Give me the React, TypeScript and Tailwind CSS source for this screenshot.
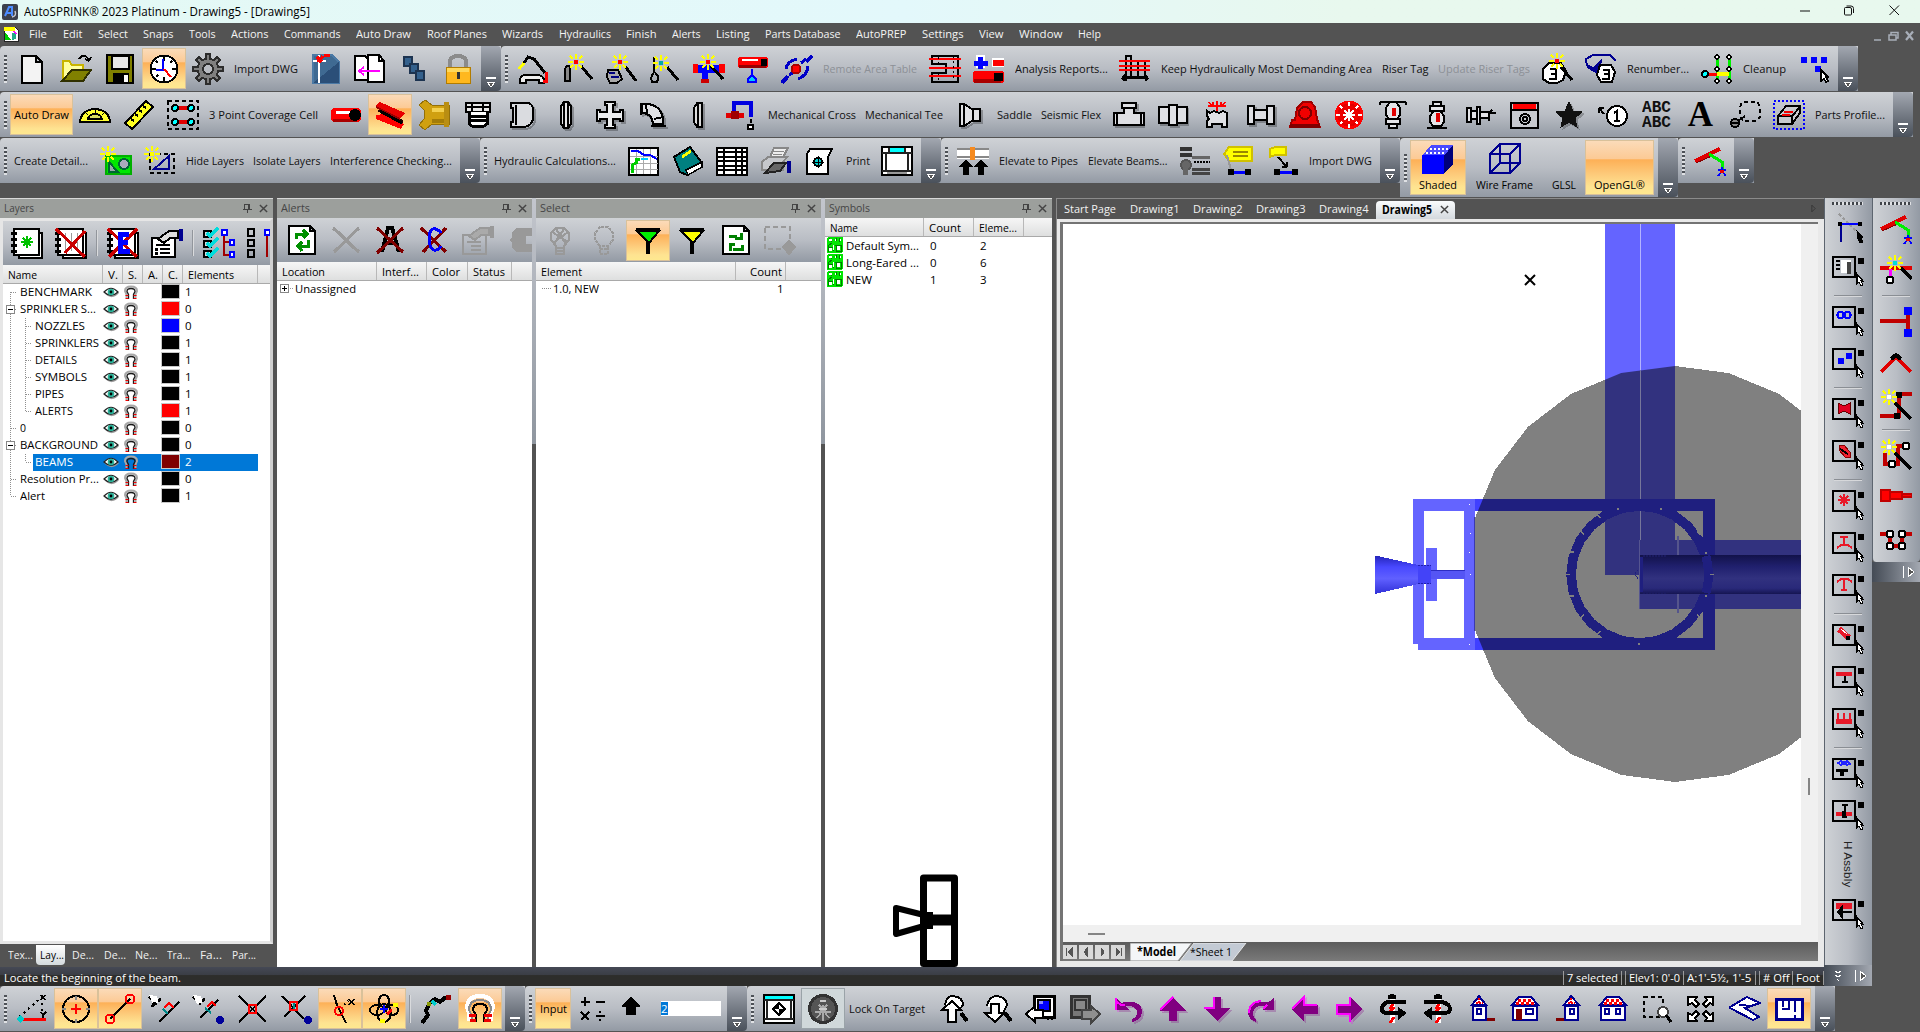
import React, { useLayoutEffect, useRef, useState } from "react";

type Kids = { children?: React.ReactNode };

/* Text condensed or widened to an exact width, as the narrow UI face needs. */
function Fit({ w, children, className = "" }: Kids & { w: number; className?: string }) {
  const ref = useRef<HTMLSpanElement>(null);
  const [k, setK] = useState(1);
  useLayoutEffect(() => {
    const el = ref.current;
    if (!el) return;
    el.style.transform = "none";
    const r = w / el.getBoundingClientRect().width;
    el.style.transform = `scaleX(${r})`;
    setK(r);
  }, [w]);
  return (
    <span className={`inline-block shrink-0 whitespace-nowrap ${className}`} style={{ width: w }}>
      <span ref={ref} className="inline-block origin-left" style={{ transform: `scaleX(${k})` }}>
        {children}
      </span>
    </span>
  );
}

const Svg = ({ children, vb = "0 0 32 32", c = "h-8 w-8" }: Kids & { vb?: string; c?: string }) => (
  <svg viewBox={vb} className={`shrink-0 ${c}`} shapeRendering="crispEdges" fill="none">
    {children}
  </svg>
);
const P = ({ d, s = "#000", w = 2, f = "none", dash }: { d: string; s?: string; w?: number; f?: string; dash?: string }) => (
  <path d={d} stroke={s} strokeWidth={w} fill={f} strokeDasharray={dash} />
);
const R = ({ x, y, w, h, f = "#000", s = "none", sw = 2 }: { x: number; y: number; w: number; h: number; f?: string; s?: string; sw?: number }) => (
  <rect x={x} y={y} width={w} height={h} fill={f} stroke={s} strokeWidth={sw} />
);
const C = ({ x, y, r, f = "none", s = "#000", w = 2 }: { x: number; y: number; r: number; f?: string; s?: string; w?: number }) => (
  <circle cx={x} cy={y} r={r} fill={f} stroke={s} strokeWidth={w} />
);
const Burst = ({ x, y, m = "#f00" }: { x: number; y: number; m?: string }) => (
  <g transform={`translate(${x} ${y})`}>
    <P d="M0 -8V-3M0 3V8M-8 0H-3M3 0H8M-6 -6L-3 -3M3 3L6 6M6 -6L3 -3M-3 3L-6 6" s="#ff0" />
    <R x={-2} y={-2} w={4} h={4} f={m} />
  </g>
);
const Shade = ({ children }: Kids) => (
  <>
    <g transform="translate(2 2)" opacity={0.25}>{children}</g>
    {children}
  </>
);

const ICON: Record<string, React.ReactNode> = {
  fresh: <P d="M6 3H20L26 9V30H6ZM20 3V9H26" f="#f3f3f3" />,
  open: (
    <>
      <P d="M3 28V8H9L12 12H23V17" f="#ffffa0" s="#c8b400" />
      <P d="M2 28L12 17H31L23 28Z" f="#808000" s="#303000" />
      <P d="M19 6C22 1 27 2 29 8M29 8L25 6M29 8L31 4" />
    </>
  ),
  save: (
    <>
      <R x={3} y={2} w={26} h={28} f="#808000" s="#000" />
      <R x={8} y={3} w={17} h={13} f="#e8e8e8" s="#000" />
      <R x={9} y={20} w={16} h={10} />
      <R x={20} y={22} w={4} h={7} f="#fff" />
    </>
  ),
  clock: (
    <>
      <C x={16} y={16} r={13.5} f="#fff" />
      <P d="M16 4V8M16 24V28M4 16H8M24 16H28M8 8L10 10M24 8L22 10M8 24L10 22" w={1.5} />
      <P d="M15 6V17H8" s="#00f" />
      <P d="M16 16L23 24" s="#f00" />
    </>
  ),
  gear: (
    <>
      <P d="M14 1H18V6L22 7L25 4L28 7L25 10L26 14H31V18H26L25 22L28 25L25 28L22 25L18 26V31H14V26L10 25L7 28L4 25L7 22L6 18H1V14H6L7 10L4 7L7 4L10 7L14 6Z" s="#2c2c2c" f="#808080" />
      <C x={16} y={16} r={5} s="#2c2c2c" f="#b9bcc2" />
    </>
  ),
  dwg: (
    <>
      <P d="M3 2H22L29 9V30H3Z" f="#3f6a92" s="#4b79a5" />
      <P d="M3 30L29 9V30Z" s="none" f="#2b4f78" />
      <P d="M9 2V30M3 8H16" s="#fff" />
      <P d="M7 4L12 9M13 3L8 9M14 2H20" s="#f00" w={3} />
    </>
  ),
  pages: (
    <>
      <P d="M1 3H11L14 6V27H1Z" f="#fff" />
      <P d="M14 2H25L30 8V29H14Z" f="#fff" />
      <P d="M25 2V8H30" />
      <P d="M26 18H5M10 14L5 18L10 22" s="#f0f" />
    </>
  ),
  cubes: (
    <>
      <R x={6} y={4} w={8} h={9} f="#33608c" s="#1c3350" />
      <R x={12} y={11} w={8} h={9} f="#33608c" s="#1c3350" />
      <R x={18} y={18} w={8} h={9} f="#33608c" s="#1c3350" />
    </>
  ),
  lock: (
    <>
      <P d="M8 15V8Q9 3 16 3Q23 3 24 8V15" s="#8b8b8b" w={4} />
      <R x={4} y={14} w={24} h={16} f="#ffb81e" s="#b27c00" sw={1} />
      <R x={5} y={15} w={22} h={4} f="#ffd85a" />
      <R x={15} y={19} w={3} h={7} f="#333" />
    </>
  ),
  helmet: (
    <>
      <P d="M7 10L11 4L17 6L28 20" w={3} />
      <P d="M2 16L7 10" s="#ff0" w={3} />
      <P d="M3 30V26Q4 21 12 22H20Q25 22 27 26V30H22V27H9V30Z" f="#eee" w={2} />
      <P d="M29 19V28H26" s="#f00" w={3} />
    </>
  ),
  wand1: (
    <>
      <P d="M5 14Q8 11 9 15V28H4V16Z" f="#888" w={2} />
      <P d="M20 13L31 26" w={3} />
      <Burst x={15} y={9} />
    </>
  ),
  wand2: (
    <>
      <P d="M3 17H13L17 26L12 30H5L2 24Z" f="#aaa" />
      <P d="M4 20H10M6 24H14" s="#00007f" />
      <P d="M20 13L31 28" w={3} />
      <Burst x={15} y={9} />
    </>
  ),
  wand3: (
    <>
      <P d="M5 4V20M5 20Q1 23 3 29H8Q11 23 6 20" />
      <P d="M18 14L29 27" w={3} />
      <Burst x={12} y={10} m="#0aa" />
    </>
  ),
  wand4: (
    <>
      <R x={1} y={12} w={30} h={8} f="#00f" />
      <R x={0} y={11} w={5} h={9} f="#f00" />
      <R x={26} y={11} w={6} h={9} f="#f00" />
      <R x={9} y={15} w={6} h={11} f="#00f" />
      <R x={8} y={26} w={8} h={4} f="#c00" />
      <P d="M18 13L30 26" w={3} />
      <Burst x={15} y={9} />
    </>
  ),
  pipeDrop: (
    <>
      <rect x={1} y={4} width={30} height={11} rx={3} fill="#f00" />
      <R x={2} y={12} w={27} h={3} f="#900" />
      <R x={5} y={6} w={16} h={2} f="#fff" />
      <R x={24} y={6} w={6} h={7} />
      <P d="M15 16V22L11 26V29H19V26L15 22" s="#00f" f="#0cf" />
    </>
  ),
  orbit: (
    <>
      <P d="M31 3L25 9M7 23L1 30" s="#0000c8" w={4} />
      <P d="M5 16Q6 8 16 6M27 13Q26 23 17 26" s="#0000c8" w={3} />
      <P d="M25 6L20 10M8 22L13 19" s="#0000c8" w={3} />
      <C x={15} y={16} r={4.5} f="#f00" s="#a00" />
    </>
  ),
  area: (
    <>
      <P d="M3 3H29V29H3V20H17V11H3Z" />
      <P d="M0 6H32M0 15H32M0 23H32" s="#f00" />
      <P d="M9 4V10M24 3V29M9 20V29" w={1} dash="2 3" />
    </>
  ),
  plusMinus: (
    <>
      <R x={3} y={2} w={9} h={13} f="#fff" />
      <P d="M7 4V16M1 10H15" s="#00f" w={5} />
      <R x={19} y={5} w={12} h={9} f="#fff" />
      <R x={20} y={7} w={11} h={6} f="#f00" />
      <rect x={0} y={18} width={31} height={12} rx={3} fill="#f00" />
      <R x={1} y={26} w={27} h={4} f="#a00" />
      <R x={21} y={20} w={9} h={8} />
    </>
  ),
  demand: (
    <>
      <P d="M7 28V3H12V8H26V24H7M3 25H29M3 25L6 22M3 25L6 28M29 25L26 22M29 25L26 28M12 8V24M19 8V24" />
      <P d="M0 8H31M0 13H31M0 17H31" s="#f00" />
    </>
  ),
  three: (
    <>
      <P d="M8 10H20L25 18L22 27L16 30H8L2 26V16Z" f="#fff" />
      <P d="M9 16H15V26H8M10 21H15" />
      <P d="M20 14L31 27" w={3} />
      <Burst x={16} y={8} />
    </>
  ),
  three2: (
    <>
      <P d="M2 13L1 6L8 2H25L31 8" s="#000090" />
      <P d="M2 13L8 17L15 10L13 20L7 15Z" s="#000090" f="#000090" w={3} />
      <P d="M15 12H26L30 19L27 29H16L12 22Z" f="#fff" />
      <P d="M18 17H24V26H17M19 21H24" />
    </>
  ),
  cleanup: (
    <>
      <P d="M16 4V28M28 4V28" s="#0e0" w={3} />
      <P d="M5 21H16" s="#f00" w={3} />
      <P d="M16 21H28" s="#ff0" w={4} />
      <C x={4} y={21} r={3} f="#0ff" />
      {[4, 16, 28].map((y) => (
        <g key={y}>
          <C x={16} y={y} r={2} f="#fff" w={1.5} />
          <C x={28} y={y} r={2} f="#fff" w={1.5} />
        </g>
      ))}
    </>
  ),
  squares: (
    <>
      <R x={4} y={4} w={6} h={6} f="#00f" />
      <R x={14} y={4} w={6} h={6} f="#00f" />
      <R x={24} y={4} w={6} h={6} f="#00f" />
      <R x={18} y={13} w={6} h={6} f="#00f" />
      <P d="M24 17V28L27 26L29 29L31 28L29 24H31Z" f="#fff" w={1.5} />
    </>
  ),
  protractor: (
    <>
      <P d="M1 23Q2 11 16 10Q30 11 31 23Z" f="#ffff30" />
      <P d="M9 20Q10 15 16 15Q22 15 23 20Z" f="#d8dc60" />
      <P d="M16 11V14M7 14L9 16M25 14L23 16" w={1} />
    </>
  ),
  ruler: (
    <>
      <P d="M2 24L23 2L30 8L9 30Z" f="#ffff20" />
      <P d="M20 7L23 9M16 11L19 13M12 15L15 17M8 20L11 22" />
    </>
  ),
  coverage: (
    <>
      <rect x={1} y={2} width={30} height={28} stroke="#000" strokeWidth={2} strokeDasharray="4 3" />
      {[9, 23].map((y) => (
        <g key={y}>
          <P d={`M8 ${y}H24`} s="#e00000" w={4} />
          <C x={8} y={y} r={3} f="#0ff" />
          <C x={24} y={y} r={3} f="#0ff" />
        </g>
      ))}
    </>
  ),
  pipe: (
    <>
      <rect x={1} y={9} width={30} height={14} rx={4} fill="#f00" />
      <R x={6} y={12} w={16} h={3} f="#fff" />
      <R x={3} y={20} w={24} h={3} f="#a00" />
      <C x={25} y={16} r={5} f="#000" />
    </>
  ),
  beam: (
    <>
      <P d="M3 12L29 26V21L26 20L6 10Z" s="none" f="#200" />
      <P d="M1 7L6 3L31 14L26 20Z" s="none" f="#e80000" />
      <P d="M2 8L26 20" s="#900" />
      <P d="M2 16L9 15L30 25L27 30L2 20Z" s="none" f="#f00" />
      <P d="M6 12L28 24" s="#000" w={3} />
    </>
  ),
  gold: (
    <>
      <P d="M1 6L7 1L14 6H31V25H14L7 31L1 26L6 20V11Z" s="#93700a" w={1} f="#d0a010" />
      <R x={14} y={9} w={14} h={4} f="#f3d04f" />
      <R x={14} y={20} w={14} h={4} f="#a37c08" />
      <R x={26} y={3} w={5} h={25} f="#b98e12" />
    </>
  ),
  cap: (
    <>
      <P d="M4 4H28V13H4ZM4 8H28M10 4V13M21 4V13" f="#e8e8e8" />
      <P d="M7 13V25L10 27H22L25 25V13M7 17H25M7 21H25" f="#fff" w={3} />
    </>
  ),
  dcap: <Shade><P d="M5 4H22Q27 5 27 11V20Q26 27 18 28H5V23H7V9H5ZM10 6V26" f="#dadce0" /></Shade>,
  flange: <Shade><P d="M14 3H18L21 7V25L18 29H14L11 25V7ZM14 3V29M18 3V29" f="#e6e6e8" /></Shade>,
  cross: (
    <Shade>
      <P d="M11 3H21V6H19V13H26V11H29V22H26V20H19V26H21V29H11V26H13V20H6V22H3V11H6V13H13V6H11Z" f="#eceef0" />
    </Shade>
  ),
  elbow: (
    <Shade>
      <P d="M4 5H10Q24 7 25 21V25H15Q14 14 4 14Z" f="#e2e3e6" />
      <P d="M3 4V16M13 27H28M8 5L9 14M16 20L25 18" />
    </Shade>
  ),
  thinFlange: <Shade><P d="M12 9L15 4H20V28H15L12 23ZM16 4V28" f="#ddd" /></Shade>,
  faucet: (
    <>
      <P d="M8 14V4H25V18" s="#0000e0" w={4} />
      <R x={0} y={14} w={18} h={5} f="#e00000" />
      <R x={5} y={12} w={8} h={8} f="#a00000" />
      <P d="M25 20V24M22 30V26H27V30Z" f="#fff" />
    </>
  ),
  reducer: (
    <Shade>
      <P d="M5 5V27H9L17 22H25V10H17L9 5Z" f="#e2e3e6" />
      <P d="M9 5V27M18 10V22" />
    </Shade>
  ),
  tee: <Shade><P d="M1 14H11V9H9V4H23V9H21V14H31V26H1ZM4 14V26M28 14V26M9 9H23" f="#dfe0e4" /></Shade>,
  coupling: <Shade><P d="M2 8H12V6H20V8H30V24H20V26H12V24H2ZM12 8V24M20 8V24" f="#dfe0e4" /></Shade>,
  weld: (
    <>
      <P d="M6 12L9 14L13 12L18 14L22 12L26 14V28H21V25H11V28H6V22L8 20L6 17Z" f="#dfe0e4" />
      <P d="M7 7H25M8 3L10 6M16 2V12M12 3V6M20 3V6M24 3L22 6" s="#f00" w={1.5} />
    </>
  ),
  union: <Shade><P d="M3 7H9V11H22V7H29V25H22V21H9V25H3ZM9 8V24M22 8V24" f="#dfe0e4" /></Shade>,
  pump: (
    <>
      <P d="M8 9L14 3H22L26 8L28 20L31 28H1L3 21H6Z" f="#f00000" s="#a00000" />
      <C x={16} y={14} r={6} s="#800000" />
      <P d="M1 27H31" s="#800000" w={4} />
    </>
  ),
  wheel: (
    <>
      <C x={16} y={16} r={13} f="#e00000" s="#f00" w={3} />
      <P d="M16 3V29M3 16H29M7 7L25 25M25 7L7 25" s="#fff" w={2} />
      <C x={16} y={16} r={8} s="#e00" w={3} />
    </>
  ),
  sprinkler1: (
    <>
      <P d="M3 3H29M3 3V6M29 3V6M12 4L9 9V16L12 20H20L23 16V9L20 4M9 20H23V25H9ZM12 25V29H20V25" f="#e4e4e8" />
      <R x={15} y={9} w={4} h={8} f="#e00000" />
    </>
  ),
  sprinkler2: (
    <>
      <P d="M12 3H20V7H12ZM9 7H23V12H9ZM12 13L9 17V23L12 27H20L23 23V17L20 13M6 29H26" f="#e4e4e8" />
      <R x={15} y={14} w={4} h={9} f="#e00000" />
    </>
  ),
  sprinkler3: <P d="M2 9H6V23H2ZM6 12H12V20H6ZM12 8H15V25H12ZM15 13H24V19H15M24 14H31M24 14L27 11M24 19V22" f="#e4e4e8" />,
  panelBox: (
    <>
      <R x={2} y={4} w={27} h={25} f="#c8cacf" s="#000" />
      <R x={4} y={5} w={23} h={5} f="#f00" />
      <P d="M2 11H29" />
      <C x={16} y={20} r={5} />
      <C x={16} y={20} r={2} />
    </>
  ),
  star: <Shade><P d="M16 3L20 12L29 13L22 19L24 28L16 23L8 28L10 19L3 13L12 12Z" f="#111" s="#111" w={1} /></Shade>,
  one: (
    <>
      <C x={20} y={17} r={10} f="#fff" />
      <P d="M17 14L20 12V22M17 22H23" />
      <P d="M2 9L7 15M2 9V14M2 9H7" />
    </>
  ),
  lasso: (
    <>
      <path d="M11 8L13 3H28L31 7V18L28 22H14L11 17Z" stroke="#000" strokeWidth={2} strokeDasharray="4 3" />
      <C x={6} y={24} r={4} f="#888" />
      <P d="M9 22L16 17M2 24H10" />
    </>
  ),
  profile: (
    <>
      <rect x={1} y={2} width={30} height={28} stroke="#00f" strokeWidth={2} strokeDasharray="2 2" />
      <P d="M5 17L13 7H27V14L19 25H5ZM5 17H19L27 8M19 17V25" f="#c7cacf" />
      <P d="M11 13H20M9 16H17" s="#e00" />
    </>
  ),
  detail: (
    <>
      <R x={6} y={11} w={25} h={18} f="#00e600" s="#00b000" />
      <P d="M9 17L18 27H9Z" f="#9aa" s="#063" />
      <C x={24} y={19} r={5} f="#aab" s="#063" />
      <Burst x={8} y={9} m="#ff0" />
    </>
  ),
  detail2: (
    <>
      <rect x={6} y={9} width={24} height={19} stroke="#000" strokeWidth={2} strokeDasharray="4 3" />
      <P d="M10 24H25V11Z" s="#000090" />
      <Burst x={8} y={9} m="#ff0" />
    </>
  ),
  graph: (
    <>
      <R x={1} y={3} w={29} h={27} f="#fff" s="#000" />
      <P d="M2 11H30M2 18H30M2 24H30M8 4V29M15 4V29M22 4V29" s="#aaa" w={1} />
      <P d="M3 6H10L16 10H22L29 14" s="#00f" />
      <P d="M4 28V20L8 18V14H12" s="#0c0" w={3} />
      <P d="M13 14H20" s="#0cf" w={2} />
    </>
  ),
  book: (
    <>
      <P d="M2 12L18 2L30 18L15 30L8 27Z" f="#008080" />
      <P d="M14 25L30 17V22L16 30Z" f="#fff" w={1.5} />
      <P d="M10 12L19 6" s="#ff0" w={3} />
    </>
  ),
  table: (
    <>
      <R x={1} y={3} w={30} h={27} f="#fff" s="#000" />
      <P d="M1 7H31M1 12H31M1 16H31M1 21H31M1 25H31M8 3V30M20 3V30M26 3V30" w={2} />
    </>
  ),
  printer: (
    <>
      <P d="M10 12L14 3H28L23 12Z" f="#eee" s="#888" />
      <P d="M14 6H24M13 9H22" s="#888" w={1} />
      <P d="M2 17L8 12H27L23 17V25H2Z" f="#c6c8cc" s="#888" />
      <P d="M5 28L14 18H26L20 26Z" f="#666" s="#222" w={2} />
      <P d="M29 16V28" s="#000090" w={4} />
    </>
  ),
  printDoc: (
    <>
      <P d="M6 4H28L24 12V29H3V9Z" f="#fff" />
      <C x={14} y={17} r={4} f="#0cc" />
      <P d="M14 11V23M8 17H20" w={1} />
    </>
  ),
  windowIcon: (
    <>
      <R x={1} y={2} w={30} h={28} f="#fff" s="#000" />
      <R x={8} y={3} w={16} h={4} f="#0ff" />
      <P d="M1 8H31M5 8V26M27 8V26M1 26H31M8 3V8M24 3V8" s="#222" />
      <R x={6} y={27} w={20} h={2} f="#999" />
    </>
  ),
  elevate: (
    <>
      <R x={0} y={3} w={32} h={11} f="#fff" />
      <P d="M0 4H32M0 12H32" s="#888" />
      <R x={13} y={2} w={5} h={13} f="#f58a1f" />
      <P d="M9 14L16 22H12V30H6V22H2Z" s="none" f="#000" />
      <P d="M24 14L31 22H27V30H21V22H17Z" s="none" f="#000" />
    </>
  ),
  hydrant: (
    <>
      <R x={1} y={2} w={12} h={4} f="#333" />
      <R x={1} y={8} w={12} h={4} f="#333" />
      <C x={7} y={20} r={5} f="#666" s="#555" />
      <R x={4} y={23} w={5} h={7} f="#666" />
      <P d="M13 12H31" s="#666" w={3} />
      <P d="M15 17H31" dash="2 1" />
      <P d="M13 24H31M13 28H31" s="#444" w={3} />
    </>
  ),
  tagY: (
    <>
      <P d="M6 2H29V16H6L1 9Z" f="#ff0" s="#d0c000" />
      <P d="M10 7H25M10 11H25" s="#998800" />
      <P d="M4 10L8 25" s="#999" />
      <P d="M10 27H24" s="#00f" w={3} />
      <R x={5} y={24} w={6} h={6} />
      <R x={22} y={24} w={6} h={6} />
    </>
  ),
  tagY2: (
    <>
      <P d="M3 4L8 2H19V10H8L3 12Z" f="#ff0" s="#d0c000" />
      <P d="M11 12L20 22M20 22H15M20 22V17" />
      <P d="M12 27H26" s="#00f" w={3} />
      <R x={7} y={24} w={6} h={6} />
      <R x={25} y={24} w={6} h={6} />
    </>
  ),
  shaded: (
    <>
      <P d="M0 14L9 3H31L22 14Z" s="none" f="#4a4aff" />
      <P d="M4 11H24M8 7H28" s="#fff" dash="2 2" />
      <P d="M22 14L31 3V22L22 32Z" s="none" f="#00007a" />
      <R x={0} y={13} w={22} h={19} f="#00f" />
    </>
  ),
  wire: <P d="M1 12H21V31H1ZM11 2H31V21H11ZM1 12L11 2M21 12L31 2M21 31L31 21M1 31L11 21" s="#000090" w={2} />,
  branch: (
    <>
      <P d="M1 16L26 4" s="#e00000" w={4} />
      <P d="M2 18L20 10" s="#800" w={1} />
      <P d="M15 9L28 17V24" s="#0e0" w={3} />
      <P d="M24 25H32M28 22V26L24 31M28 26L32 31" s="#00f" w={2} />
      <R x={26} y={25} w={4} h={3} f="#e00" />
    </>
  ),
  layerNew: (
    <>
      <P d="M8 6H31V31H8Z" f="#fff" />
      <P d="M3 2H28V28H3Z" f="#fff" />
      <P d="M0 6H6M0 12H6M0 18H6M0 24H6" w={3} />
      <P d="M16 9V21M10 15H22M12 11L20 19M20 11L12 19" s="#00c000" />
    </>
  ),
  layerDel: (
    <>
      <P d="M8 6H31V31H8Z" f="#fff" />
      <P d="M3 2H28V28H3Z" f="#fff" />
      <P d="M0 6H6M0 12H6M0 18H6M0 24H6" w={3} />
      <P d="M10 6V24M16 6V24M22 6V24" w={1} s="#999" />
      <P d="M1 2L30 30M30 4L10 26" s="#c80000" w={3} />
    </>
  ),
  layerE: (
    <>
      <P d="M8 6H31V31H8Z" f="#fff" />
      <P d="M3 2H28V28H3Z" f="#fff" />
      <P d="M0 6H6M0 12H6M0 18H6M0 24H6" w={3} />
      <P d="M1 2L30 30M30 2L2 30" s="#c80000" w={3} />
      <P d="M22 7H13V24H23M13 15H21" s="#00f" w={5} />
    </>
  ),
  props: (
    <>
      <P d="M1 11H24V30H1Z" f="#fff" />
      <P d="M5 18H19M9 22H19M9 26H19" />
      <R x={4} y={21} w={3} h={3} />
      <R x={4} y={25} w={3} h={3} />
      <P d="M7 12L18 4H27V11H19L13 16Z" f="#ddd" />
      <P d="M30 2V14" s="#000090" w={4} />
    </>
  ),
  tree: (
    <>
      {[4, 14, 24].map((y) => (
        <g key={y}>
          <R x={1} y={y} w={7} h={6} f="#cdd" s="#000" />
          <P d={`M4 ${y + 2}L7 ${y + 5}L15 ${y - 3}`} s="#0dd" w={3} />
        </g>
      ))}
      <P d="M21 7V28H27M21 15H27" s="#a00000" />
      <R x={19} y={3} w={5} h={5} f="#fff" s="#00f" />
      <R x={27} y={13} w={4} h={5} f="#fff" s="#00f" />
      <R x={27} y={25} w={4} h={5} f="#fff" s="#00f" />
    </>
  ),
  boxes3: <P d="M13 2H19V9H13ZM13 13H19V19H13ZM13 23H19V30H13Z" w={2} />,
  refresh: (
    <>
      <P d="M3 2H24L29 7V30H3ZM24 2V7H29" f="#fff" />
      <P d="M10 15V10H21M17 6L21 10L17 14M22 16V22H12M16 18L12 22L16 27" s="#009000" w={3} />
    </>
  ),
  grayX: <P d="M3 4L29 28M29 4L4 28M8 8L24 24" s="#999" w={3} />,
  redA: (
    <>
      <P d="M8 28L14 4H18L25 28M11 19H22" s="#000" w={4} />
      <P d="M3 4L29 28M29 4L3 29" s="#800000" w={3} />
    </>
  ),
  redC: (
    <>
      <P d="M3 4L28 28M28 4L5 28" s="#800000" w={3} />
      <P d="M23 9Q19 4 15 5Q11 7 11 14Q11 24 16 26Q20 27 23 22" s="#00f" w={3} />
    </>
  ),
  grayProps: (
    <>
      <P d="M1 11H24V30H1ZM5 18H19M9 22H19M9 26H19" s="#999" />
      <P d="M7 12L18 4H27V11H19L13 16Z" f="#aaa" s="#999" />
      <P d="M30 2V14" s="#999" w={4} />
    </>
  ),
  grayCircle: <P d="M3 16L6 13V8L10 4H26V12H20V20H26V28H10L6 24V19Z" s="none" f="#999" />,
  bulb1: <P d="M12 30V22L7 16V9L12 4H20L25 9V16L20 22V30ZM8 8L24 18M24 8L9 19M12 5L22 20M20 5L10 20M12 24H20M12 27H20" s="#999" />,
  bulb2: <P d="M12 22L7 16V9L12 3H20L25 9V16L20 22ZM12 22V30H20V22M12 25H20" s="#999" dash="3 1" />,
  funnelG: (
    <>
      <P d="M5 7H27L17 19Z" f="#00f000" />
      <P d="M4 6H28M16 17V30" w={4} />
    </>
  ),
  funnelY: (
    <>
      <P d="M5 7H27L17 19Z" f="#ffff00" />
      <P d="M4 6H28M16 17V30" w={4} />
    </>
  ),
  refresh2: (
    <>
      <P d="M3 2H24L29 7V30H3ZM24 2V7H29" f="#fff" />
      <P d="M10 14V12H17M21 9V14H15M10 25V20H15M22 21V25H13M10 27V22" s="#008000" w={3} />
    </>
  ),
  graySel: (
    <>
      <rect x={1} y={3} width={25} height={22} stroke="#999" strokeWidth={2} strokeDasharray="5 3" />
      <P d="M25 17L31 23L25 30L19 23Z" f="#999" s="#999" />
    </>
  ),
  snap1: (
    <>
      <P d="M3 24L26 4V22" dash="2 4" />
      <P d="M4 26H30" s="#f00" w={3} />
      <P d="M4 22L8 26L4 30L0 26Z" s="none" f="#0cc" />
      <P d="M25 2L29 7M29 2L25 7M25 19L27 22L30 19M27 22V25" w={1.5} />
    </>
  ),
  snap2: (
    <>
      <C x={16} y={16} r={13} />
      <P d="M16 11V21M11 16H21" s="#f00" />
      <P d="M16 3V7M16 26V30M2 16H6M26 16H30" s="#888" />
    </>
  ),
  snap3: (
    <>
      <P d="M6 26L26 6" />
      <C x={6} y={26} r={4.5} s="#f00" />
      <C x={26} y={6} r={4.5} s="#f00" />
    </>
  ),
  snap4: (
    <>
      <P d="M11 29L31 9M1 4L9 12" />
      <P d="M1 2L9 3L11 9L5 11Z" s="none" f="#fff" />
      <P d="M10 8L13 6M4 14L7 9" w={3} />
      <P d="M15 16L20 21" s="#088" />
      <P d="M16 15L21 10L26 15" s="#f00" />
    </>
  ),
  snap5: (
    <>
      <P d="M8 25L26 7M1 4L9 12" />
      <P d="M1 2L9 3L11 9L5 11Z" s="none" f="#fff" />
      <P d="M10 8L13 6" w={3} />
      <P d="M13 15L19 20" s="#088" />
      <P d="M15 14L20 9L24 13" s="#f00" />
      <C x={28} y={27} r={3.5} f="#00009a" s="#00009a" w={1} />
    </>
  ),
  snap6: (
    <>
      <P d="M3 3L30 29M30 3L3 29" />
      <R x={13} y={12} w={7} h={8} f="none" s="#f00" />
    </>
  ),
  snap7: (
    <>
      <P d="M2 3L24 26M25 3L4 24" />
      <P d="M14 8V18" s="#088" />
      <R x={10} y={9} w={7} h={8} f="none" s="#f00" />
      <C x={28} y={27} r={3.5} f="#00009a" s="#00009a" w={1} />
    </>
  ),
  snap8: (
    <>
      <P d="M10 2L13 12L22 30" />
      <C x={15} y={18} r={4} s="#f00" />
      <P d="M20 12L24 8" dash="2 3" />
      <P d="M25 6L30 12M30 6L25 12" w={1.5} />
    </>
  ),
  snap9: (
    <>
      <ellipse cx={16} cy={8} rx={5} ry={6} stroke="#000" strokeWidth={2} />
      <ellipse cx={9} cy={17} rx={7} ry={5} stroke="#000" strokeWidth={2} />
      <ellipse cx={24} cy={17} rx={6} ry={5} stroke="#000" strokeWidth={2} />
      <ellipse cx={16} cy={20} rx={7} ry={9} stroke="#000" strokeWidth={2} />
      <P d="M16 12V20M12 16H20" s="#00f" />
      <P d="M19 21L24 17" s="#f00" w={3} />
      <R x={25} y={10} w={5} h={4} f="#ff0" />
      <R x={12} y={26} w={5} h={4} f="#ff0" />
    </>
  ),
  snap10: (
    <>
      <P d="M2 30L8 22L6 18L9 11L15 6L20 9L26 4" w={4} />
      <P d="M12 8L16 12" s="#0cc" w={3} />
      <R x={26} y={2} w={5} h={5} f="#900" />
      <R x={7} y={9} w={4} h={4} f="#890" />
    </>
  ),
  magnetBig: (
    <>
      <P d="M5 28V20L3 14Q4 3 16 3Q28 3 29 14L27 20V28" s="#fff" w={4} />
      <P d="M8 29V23L5 17Q5 7 16 7Q27 7 27 17L24 23V29" s="#8a8a8a" w={2} />
      <P d="M12 29V22L9 17Q9 11 16 11Q23 11 23 17L20 22V29" s="#000" w={2} />
      <P d="M5 22H12M20 22H28M6 27H12M20 27H27" s="#e00" w={3} />
    </>
  ),
  ops: <P d="M4 9H13M8 4V13M19 9H28M4 19L12 27M12 19L4 27M19 23H28M23 18V20M23 26V28" w={2.5} />,
  upBlack: <P d="M16 3L25 13V14H21V22H11V14H7V13Z" s="none" f="#000" />,
  viewWin: (
    <>
      <R x={1} y={2} w={30} h={28} f="#fff" s="#000" />
      <R x={2} y={3} w={28} h={3} f="#0ff" />
      <P d="M1 7H31M4 7V26M28 7V26M1 26H31" s="#222" />
      <P d="M16 10L22 16L16 22L10 16Z" f="#fff" />
      <P d="M16 10V16H10ZM16 16H22L16 22Z" s="none" f="#000" />
    </>
  ),
  target: (
    <>
      <C x={16} y={16} r={13.5} f="#555" s="#333" w={3} />
      <P d="M16 12V28M8 19H24M10 25L16 17L22 25M12 12L20 20M20 12L12 20" s="#aaa" w={1.5} />
      <P d="M13 8H19M12 16H20" s="#ccc" />
    </>
  ),
  zoomOut: (
    <>
      <P d="M8 12Q9 3 16 3Q26 4 26 12L22 17" f="#fff" />
      <P d="M24 20L30 28" w={4} />
      <P d="M15 8L24 17H19V29H11V17H5Z" f="#fff" />
    </>
  ),
  zoomIn: (
    <>
      <P d="M6 13Q8 3 16 3Q25 4 26 12L22 20" f="#fff" />
      <P d="M24 20L30 28" w={4} />
      <P d="M10 11H18V20H23L14 29L4 20H10Z" f="#fff" />
    </>
  ),
  viewBack: (
    <>
      <P d="M9 3H29V24H9Z" f="#fff" w={3} />
      <R x={13} y={7} w={12} h={11} f="#00f" s="#000" />
      <R x={14} y={8} w={4} h={3} f="#88f" />
      <P d="M1 21L10 13V17H18V25H10V29Z" f="#fff" />
      <P d="M22 26H29" dash="2 2" />
    </>
  ),
  viewFwd: (
    <>
      <P d="M2 3H20V24H2Z" f="#777" s="#333" w={3} />
      <R x={6} y={7} w={11} h={10} f="#888" s="#333" />
      <P d="M31 21L22 13V17H13V26H22V30Z" f="#8f8f8f" s="#444" />
    </>
  ),
  rotL: (
    <Shade>
      <P d="M4 5V17H16L12 13Q24 12 24 20Q24 25 19 26V29Q29 27 29 18Q28 7 11 9L8 10Z" s="none" f="#800080" />
      <P d="M3 5V17M4 9L8 12H12" s="#f0f" w={2} />
    </Shade>
  ),
  up: (
    <Shade>
      <P d="M16 4L29 18H20V28H12V18H3Z" s="none" f="#800080" />
      <P d="M3 17L16 4" s="#f0f" w={2} />
    </Shade>
  ),
  down: (
    <Shade>
      <P d="M16 28L29 15H20V4H12V15H3Z" s="none" f="#800080" />
      <P d="M13 4V15H3" s="#f0f" w={2} />
    </Shade>
  ),
  rotR: (
    <Shade>
      <P d="M29 4V17H17L21 13Q8 12 8 20Q8 25 11 26V29Q3 27 3 18Q4 7 22 9L25 8Z" s="none" f="#800080" />
      <P d="M4 20Q4 9 16 8M18 16L22 12" s="#f0f" w={2} />
    </Shade>
  ),
  left: (
    <Shade>
      <P d="M3 16L15 4V12H29V21H15V29Z" s="none" f="#800080" />
      <P d="M3 16L15 4V12H28" s="#f0f" w={2} />
    </Shade>
  ),
  right: (
    <Shade>
      <P d="M29 16L17 4V12H3V21H17V29Z" s="none" f="#800080" />
      <P d="M17 29V21H4V12H17V4" s="#f0f" w={2} />
    </Shade>
  ),
  spinL: (
    <>
      <P d="M15 6V30" s="#fff" w={5} />
      <P d="M17 9L13 16M17 14L13 19M17 24L13 30" s="#f00" w={3} />
      <P d="M11 4H19M15 1V6" w={4} />
      <P d="M29 9H11Q5 11 5 16Q5 20 11 20H26" w={4} />
      <P d="M21 14L30 20L21 27Z" f="#000" s="none" />
    </>
  ),
  spinR: (
    <>
      <P d="M17 6V30" s="#fff" w={5} />
      <P d="M19 9L15 16M19 14L15 19M19 24L15 30" s="#f00" w={3} />
      <P d="M13 4H21M17 1V6" w={4} />
      <P d="M3 9H21Q29 11 29 16Q29 20 21 20H6" w={4} />
      <P d="M11 14L2 20L11 27Z" f="#000" s="none" />
    </>
  ),
  house1: (
    <>
      <P d="M8 13H21V27H8Z" f="#fff" s="#000090" />
      <P d="M7 12L14 3L21 12Z" f="#fff" s="#000090" />
      <P d="M14 5V11M11 10H18" s="#f00" dash="2 1" />
      <R x={12} y={16} w={4} h={5} f="#fff" s="#000090" />
      <P d="M22 26H30" s="#800000" w={3} />
    </>
  ),
  house2: (
    <>
      <P d="M4 13H28V27H4Z" f="#fff" s="#000090" />
      <P d="M3 12L10 4H22L29 12Z" f="#fff" s="#000090" />
      <P d="M9 7H23M7 10H25" s="#f00" w={3} dash="3 2" />
      <R x={7} y={16} w={6} h={11} f="#800000" />
      <R x={17} y={16} w={7} h={5} f="#fff" s="#000090" />
    </>
  ),
  house3: (
    <>
      <P d="M12 13H25V27H12Z" f="#fff" s="#000090" />
      <P d="M11 12L18 3L26 12Z" f="#fff" s="#000090" />
      <P d="M18 5V11M15 10H22" s="#f00" dash="2 1" />
      <R x={17} y={16} w={4} h={5} f="#fff" s="#000090" />
      <P d="M3 26H11" s="#800000" w={3} />
    </>
  ),
  house4: (
    <>
      <P d="M4 13H28V27H4Z" f="#fff" s="#000090" />
      <P d="M3 12L10 4H22L29 12Z" f="#fff" s="#000090" />
      <P d="M9 7H23M7 10H25" s="#f00" w={3} dash="3 2" />
      <R x={8} y={16} w={4} h={5} f="#fff" s="#000090" />
      <R x={19} y={16} w={4} h={5} f="#fff" s="#000090" />
    </>
  ),
  zoomSel: (
    <>
      <rect x={3} y={4} width={19} height={20} stroke="#000" strokeWidth={2} strokeDasharray="4 3" />
      <C x={22} y={19} r={5} f="#fff" s="#444" />
      <P d="M25 22L30 29" w={3} />
    </>
  ),
  extents: (
    <P d="M3 4H12L10 7L14 11L11 14L7 10L3 12ZM28 4H20L22 7L18 11L21 14L25 10L28 12ZM3 28H12L10 25L14 21L11 18L7 22L3 20ZM28 28H20L22 25L18 21L21 18L25 22L28 20Z" f="#fff" w={1.5} />
  ),
  iso: (
    <>
      <P d="M1 14L18 4L31 10L16 15L30 24L24 27L1 15Z" f="#fff" s="#000090" />
      <P d="M10 12L24 13" s="#000090" />
    </>
  ),
  plan: (
    <>
      <R x={3} y={6} w={26} h={20} f="#fff" s="#000090" sw={3} />
      <P d="M10 7V14M16 7V16H9M22 7V19M22 22V25" s="#000090" />
    </>
  ),
  vAxis: (
    <>
      <P d="M7 1L28 22" s="#999" dash="3 2" />
      <P d="M8 11H28" s="#00f" />
      <P d="M9 12V29" s="#000090" />
      <R x={6} y={9} w={4} h={4} />
      <R x={26} y={9} w={4} h={4} />
      <P d="M25 18L31 24L29 26L31 29L28 30L26 26Z" f="#000" w={1} />
    </>
  ),
  vWand: (
    <>
      <P d="M0 13H32" s="#e00000" w={4} />
      <P d="M10 14V24" s="#f0f" w={3} />
      <C x={10} y={25} r={3.5} f="#fff" />
      <P d="M21 13L32 24" w={3} />
      <Burst x={15} y={8} m="#0dd" />
    </>
  ),
  vTee: (
    <>
      <P d="M0 16H26" s="#c00000" w={4} />
      <P d="M28 4V28" s="#c00000" w={4} />
      <R x={24} y={2} w={8} h={8} f="#00f" />
      <R x={24} y={24} w={8} h={8} f="#00f" />
    </>
  ),
  vAngle: (
    <>
      <P d="M1 25L16 10L31 25" s="#e00000" w={4} />
      <P d="M11 12L16 8L21 12" w={4} />
    </>
  ),
  vZ1: (
    <>
      <P d="M32 5H19V27H0" s="#c00000" w={4} />
      <R x={16} y={3} w={6} h={6} />
      <R x={14} y={24} w={6} h={6} />
      <P d="M15 14L31 30" w={4} />
      <Burst x={9} y={8} m="#fff" />
    </>
  ),
  vZ2: (
    <>
      <P d="M25 7H18V25H5V14" s="#c00000" w={4} />
      <C x={26} y={7} r={3.5} f="#fff" />
      <C x={12} y={25} r={3.5} f="#fff" />
      <P d="M15 14L31 30" w={4} />
      <Burst x={9} y={8} m="#fff" />
    </>
  ),
  vReduce: <P d="M1 9H10V20H1ZM10 11H22V18H10ZM22 13H32V16H22" s="#c00000" f="#f00" w={1.5} />,
  vU: (
    <>
      <P d="M0 11H10V23H22V11H32" s="#c00000" w={4} />
      <C x={10} y={11} r={3.5} f="#fff" />
      <C x={22} y={11} r={3.5} f="#fff" />
      <C x={10} y={23} r={3.5} f="#fff" />
      <C x={22} y={23} r={3.5} f="#fff" />
    </>
  ),
};

const Icon = ({ n, c }: { n: string; c?: string }) => <Svg c={c}>{ICON[n]}</Svg>;

const HOT =
  "bg-[linear-gradient(#fbdcbb_0%,#fcca95_34%,#fdb057_36%,#fdc878_60%,#fee391_85%,#fee98f_100%)] shadow-[inset_0_0_0_1px_#d9c19a]";

/* One 44px toolbar slot holding an icon. */
const B = ({ n, hot, children }: Kids & { n?: string; hot?: boolean }) => (
  <div className={`flex h-[41px] w-[44px] shrink-0 items-center justify-center ${hot ? HOT : ""}`}>
    {n ? <Icon n={n} /> : children}
  </div>
);
const L = ({ w, children, off }: Kids & { w: number; off?: boolean }) => (
  <div className={`flex shrink-0 pl-1 pr-[5.5px] ${off ? "text-[#8c9096]" : "text-[#101010]"}`}>
    <Fit w={w}>{children}</Fit>
  </div>
);
const Grip = () => (
  <div className="flex w-[10px] shrink-0 justify-center">
    <div className="h-7 w-[3px] bg-[repeating-linear-gradient(#4d5157_0_2px,#dfe1e4_2px_4px)]" />
  </div>
);
const More = ({ h = "h-[45px]" }: { h?: string }) => (
  <div className={`flex w-5 shrink-0 flex-col items-center justify-end self-start rounded-r bg-linear-to-b from-[#a3a8b1] to-[#4a515b] pb-[2px] ${h}`}>
    <svg viewBox="0 0 10 13" className="h-[13px] w-[10px]" fill="none" shapeRendering="crispEdges">
      <path d="M0 1.5H10" stroke="#fff" strokeWidth="2" />
      <path d="M1 6H9L5 11Z" fill="#555" stroke="#fff" />
    </svg>
  </div>
);
const BAR = "bg-linear-to-b from-[#cfd2d6] via-[#b9bdc4] to-[#939aa4]";
const Bar = ({ children, h = "h-[45px]", end = "" }: Kids & { h?: string; end?: string }) => (
  <div className={`flex shrink-0 items-center rounded-tl ${BAR} ${h}`}>
    <div className={`flex items-center ${end}`}>
      <Grip />
      {children}
    </div>
    <More h={h} />
  </div>
);

const Pin = () => (
  <svg viewBox="0 0 10 10" className="h-[10px] w-[10px]" fill="none" stroke="#444" shapeRendering="crispEdges">
    <path d="M2.5 1V6M7 1V6M2 1.5H8M6 1V6M0.5 6.5H9.5M5 6V10" />
  </svg>
);
const Cross = () => (
  <svg viewBox="0 0 10 10" className="h-[9px] w-[9px]" fill="none" stroke="#444" strokeWidth="1.6">
    <path d="M1 1L9 9M9 1L1 9" />
  </svg>
);
const PanelHead = ({ children, w }: Kids & { w: number }) => (
  <div className="flex h-5 shrink-0 items-center border-t border-[#d8d8d8] bg-[#9c9f9c] pb-px pl-1 pr-[5px] text-[#454545]">
    <Fit w={w}>{children}</Fit>
    <div className="ml-auto flex items-center gap-[7px]">
      <Pin />
      <Cross />
    </div>
  </div>
);
const Col = ({ children, w, c }: Kids & { w: number; c: string }) => (
  <div className={`flex h-full shrink-0 items-center border-r border-[#b8b8b8] pl-[5px] pt-[2px] ${c}`}>
    {children ? <Fit w={w}>{children}</Fit> : null}
  </div>
);
const HEAD = "flex h-[19px] shrink-0 overflow-hidden border-b border-[#a9a9a9] bg-linear-to-b from-[#f6f6f6] to-[#dedfdf] text-black";

type Row = [string, number, number, string, string, string?];
const ROWS: Row[] = [
  ["BENCHMARK", 72, 0, "bg-black", "1"],
  ["SPRINKLER S...", 76, 0, "bg-[#ff0000]", "0", "-"],
  ["NOZZLES", 50, 1, "bg-[#0000ff]", "0"],
  ["SPRINKLERS", 64, 1, "bg-black", "1"],
  ["DETAILS", 42, 1, "bg-black", "1"],
  ["SYMBOLS", 52, 1, "bg-black", "1"],
  ["PIPES", 29, 1, "bg-black", "1"],
  ["ALERTS", 38, 1, "bg-[#ff0000]", "1"],
  ["0", 6, 0, "bg-black", "0"],
  ["BACKGROUND", 78, 0, "bg-black", "0", "-"],
  ["BEAMS", 38, 1, "bg-[#800000]", "2"],
  ["Resolution Pr...", 79, 0, "bg-black", "0"],
  ["Alert", 25, 0, "bg-black", "1"],
];

const Eye = () => (
  <svg viewBox="0 0 16 12" className="h-3 w-4" fill="none">
    <path d="M2 7Q9 14 15.500 6.500" stroke="#999" strokeWidth="1.500" />
    <path d="M1 6Q8 -1.500 15 6Q8 12.500 1 6Z" fill="#fff" stroke="#222" strokeWidth="1.200" />
    <circle cx="8" cy="6" r="3.300" fill="#2ab39a" />
    <circle cx="8" cy="6" r="1.400" fill="#000" />
  </svg>
);
const Magnet = () => (
  <svg viewBox="0 0 14 15" className="h-[15px] w-[14px]" fill="none">
    <path d="M2.500 13V9.500L1 6Q1 1.500 7 1.500Q13 1.500 13 6L11.500 9.500V13" stroke="#a8a8a8" strokeWidth="2" />
    <path d="M4.500 14V9.500L3 6.500Q3 3.500 7 3.500Q11 3.500 11 6.500L9.500 9.500V14" stroke="#1a1a1a" strokeWidth="1.300" />
    <path d="M1.500 10.500H4.500M9.500 10.500H12.500M1.500 13.500H4.500M9.500 13.500H12.500" stroke="#e00" strokeWidth="1.200" />
  </svg>
);

function Layers() {
  return (
    <div className="flex w-[273px] shrink-0 flex-col">
      <PanelHead w={30}>Layers</PanelHead>
      <div className="flex h-[726px] flex-col border-[3px] border-[#e6e6e6] border-r-[#d0d0d0] bg-white">
        <div className={`flex h-11 shrink-0 items-center overflow-hidden pl-[2px] ${BAR}`}>
          <B n="layerNew" />
          <B n="layerDel" />
          <div className="mx-[3px] h-[26px] w-[2px] shrink-0 bg-linear-to-r from-[#70757d] to-white" />
          <B n="layerE" />
          <B n="props" />
          <div className="mx-[3px] h-[26px] w-[2px] shrink-0 bg-linear-to-r from-[#70757d] to-white" />
          <B n="tree" />
          <div className="-ml-[6px] w-8 shrink-0"><Icon n="boxes3" /></div>
          <Svg c="-ml-2 h-8 w-8"><P d="M8 7V30" s="#a00000" /><R x={6} y={3} w={5} h={5} f="#fff" s="#00f" /></Svg>
        </div>
        <div className={HEAD}>
          <Col w={29} c="w-[100px]">Name</Col>
          <Col w={10} c="w-5">V.</Col>
          <Col w={9} c="w-5">S.</Col>
          <Col w={10} c="w-5">A.</Col>
          <Col w={10} c="w-5">C.</Col>
          <Col w={46} c="w-[75px]">Elements</Col>
        </div>
        <div className="relative">
          <svg className="absolute left-0 top-0 h-[221px] w-[40px]" fill="none" stroke="#909090" strokeDasharray="1 1" shapeRendering="crispEdges">
            <path d="M7.500 8V212M7.500 8.500H14M12 25.500H14M7.500 144.500H14M12 161.500H14M7.500 195.500H14M7.500 212.500H14M22.500 34V128M22.500 42.500H29M22.500 59.500H29M22.500 76.500H29M22.500 93.500H29M22.500 110.500H29M22.500 127.500H29M22.500 170V178M22.500 178.500H29" />
          </svg>
          {ROWS.map(([name, w, lvl, sw, n, box], i) => (
            <div key={name} className="relative flex h-[17px] items-center">
              <div className="flex w-[17px] shrink-0 pl-[3px]">
                {box ? (
                  <svg viewBox="0 0 9 9" className="h-[9px] w-[9px]" shapeRendering="crispEdges">
                    <path d="M0.500 0.500H8.500V8.500H0.500Z" fill="#fff" stroke="#888" />
                    <path d="M2 4.500H7" stroke="#000" />
                  </svg>
                ) : null}
              </div>
              {lvl ? <div className="w-[13px] shrink-0" /> : null}
              <div className={`flex h-full items-center ${i === 10 ? "w-[225px] bg-[#0078d7] text-white" : "text-black"} ${lvl ? "pl-[2px]" : ""}`}>
                <div className={`shrink-0 -translate-y-px ${lvl ? "w-[66px]" : "w-[81px]"}`}><Fit w={w}>{name}</Fit></div>
                <div className="flex w-5 shrink-0 -translate-y-px justify-center"><Eye /></div>
                <div className="flex w-5 shrink-0 justify-center"><Magnet /></div>
                <div className="w-[21px] shrink-0" />
                <div className={`h-[13px] w-[17px] shrink-0 -translate-y-px shadow-[0_0_0_1px_#c8c8c8] ${sw}`} />
                <div className="ml-[6px] -translate-y-px">{n}</div>
              </div>
            </div>
          ))}
        </div>
      </div>
      <div className="flex h-[23px] items-center pb-[2px] text-[#f0f0f0]">
        <div className="w-9 shrink-0 pl-2"><Fit w={25}>Tex...</Fit></div>
        <div className="flex h-5 w-[29px] shrink-0 items-center rounded-b bg-linear-to-b from-white to-[#d4dadd] pl-1 text-black"><Fit w={24}>Lay...</Fit></div>
        <div className="flex gap-[9.500px] pl-[7px]">
          <Fit w={22}>De...</Fit>
          <Fit w={22}>De...</Fit>
          <Fit w={22.500}>Ne...</Fit>
          <Fit w={23.500}>Tra...</Fit>
          <Fit w={22}>Fa...</Fit>
          <Fit w={24}>Par...</Fit>
        </div>
      </div>
    </div>
  );
}

const Splitter = () => (
  <div className="flex w-[4px] shrink-0 flex-col">
    <div className="h-[246px] bg-linear-to-b from-[#c3c6cd] to-[#8f969f]" />
  </div>
);

function Alerts() {
  return (
    <div className="flex w-[255px] shrink-0 flex-col bg-white">
      <PanelHead w={29}>Alerts</PanelHead>
      <div className={`flex h-11 shrink-0 items-center overflow-hidden pl-[3px] ${BAR}`}>
        <B n="refresh" />
        <B n="grayX" />
        <B n="redA" />
        <B n="redC" />
        <B n="grayProps" />
        <B n="grayCircle" />
      </div>
      <div className={HEAD}>
        <Col w={43} c="w-[100px]">Location</Col>
        <Col w={37} c="w-[50px]">Interf...</Col>
        <Col w={28} c="w-[41px]">Color</Col>
        <Col w={32} c="w-[44px]">Status</Col>
      </div>
      <div className="-mt-px flex h-[17px] items-center pl-[3px] text-black">
        <svg viewBox="0 0 14 9" className="mr-px h-[9px] w-[14px]" shapeRendering="crispEdges">
          <path d="M0.500 0.500H8.500V8.500H0.500Z" fill="#fff" stroke="#888" />
          <path d="M2 4.500H7M4.500 2V7" stroke="#000" />
          <path d="M10 4.500H13" stroke="#999" strokeDasharray="1 1" />
        </svg>
        <Fit w={61}>Unassigned</Fit>
      </div>
    </div>
  );
}

function Select() {
  return (
    <div className="flex w-[285px] shrink-0 flex-col bg-white">
      <PanelHead w={30}>Select</PanelHead>
      <div className={`flex h-11 shrink-0 items-center overflow-hidden pl-[2px] ${BAR}`}>
        <B n="bulb1" />
        <B n="bulb2" />
        <B n="funnelG" hot />
        <B n="funnelY" />
        <B n="refresh2" />
        <B n="graySel" />
      </div>
      <div className={HEAD}>
        <Col w={41} c="w-[200px]">Element</Col>
        <Col w={32} c="w-[50px] pl-[14px]">Count</Col>
      </div>
      <div className="-mt-px flex h-[17px] items-center pl-[6px] text-black">
        <div className="mr-[2px] w-[9px] border-t border-dotted border-[#888]" />
        <Fit w={46}>1.0, NEW</Fit>
        <div className="ml-[178px]">1</div>
      </div>
    </div>
  );
}

const SymbolGlyph = () => (
  <svg viewBox="0 0 16 16" className="h-4 w-4 shrink-0 -translate-y-px" shapeRendering="crispEdges">
    <rect width="16" height="16" rx="2" fill="#00e600" />
    <path d="M1 15V9L5 6M2 1L5 5M9 1V4M12 1V5M2 10H6V14M8 8H14V14H9V8" stroke="#007a00" fill="none" />
    <path d="M2 2H5V4H2ZM2 11H5V14H2ZM10 9H13V13H10ZM8 2H9V4H8ZM13 2H14V4H13ZM6 8H7V13H6Z" fill="#fff" />
  </svg>
);

function Symbols() {
  const rows: [string, number, string, string][] = [
    ["Default Sym...", 73, "0", "2"],
    ["Long-Eared ...", 73, "0", "6"],
    ["NEW", 26, "1", "3"],
  ];
  return (
    <div className="flex w-[227px] shrink-0 flex-col bg-white">
      <PanelHead w={41}>Symbols</PanelHead>
      <div className={HEAD}>
        <Col w={28} c="w-[99px]">Name</Col>
        <Col w={32} c="w-[50px]">Count</Col>
        <Col w={38} c="w-[50px]">Eleme...</Col>
      </div>
      {rows.map(([n, w, a, b]) => (
        <div key={n} className="flex h-[17px] items-center pl-[2px] text-black">
          <SymbolGlyph />
          <div className="w-[85px] shrink-0 pl-[3px]"><Fit w={w}>{n}</Fit></div>
          <div className="w-[50px] shrink-0 pl-[2px]">{a}</div>
          <div className="pl-[2px]">{b}</div>
        </div>
      ))}
      <svg viewBox="0 0 70 96" className="ml-[65px] mt-auto h-[96px] w-[70px]" fill="none" stroke="#000" strokeWidth="7" strokeLinejoin="round">
        <path d="M33.500 7H64.500V92.500H33.500Z" />
        <path d="M6 37L34 44V55L6 63Z" strokeWidth="6" />
        <path d="M34 49H64" strokeWidth="11" />
        <path d="M40 41V58" strokeWidth="6" />
      </svg>
    </div>
  );
}

const gon = (cx: number, cy: number, r: number, n = 24) =>
  Array.from({ length: n }, (_, i) => {
    const a = (i * 2 * Math.PI) / n;
    return `${(cx + r * Math.sin(a)).toFixed(1)},${(cy - r * Math.cos(a)).toFixed(1)}`;
  }).join(" ");

/* The model canvas; its coordinates start at page point (1063, 224). */
function Model() {
  return (
    <svg viewBox="1063 224 738 701" className="h-[701px] w-[738px] shrink-0 bg-white" shapeRendering="crispEdges" fill="none">
      <defs>
        <clipPath id="disc"><polygon points={gon(1675, 574, 208)} /></clipPath>
        <linearGradient id="cone" x1="0" y1="0" x2="0" y2="1">
          <stop offset="0" stopColor="#2424b8" />
          <stop offset="0.3" stopColor="#4848ff" />
          <stop offset="0.6" stopColor="#6060ff" />
          <stop offset="1" stopColor="#3030d8" />
        </linearGradient>
        <linearGradient id="tube" x1="0" y1="0" x2="0" y2="1">
          <stop offset="0" stopColor="#12124a" />
          <stop offset="0.3" stopColor="#20206e" />
          <stop offset="0.6" stopColor="#31317f" />
          <stop offset="0.85" stopColor="#29297a" />
          <stop offset="1" stopColor="#151552" />
        </linearGradient>
      </defs>
      <polygon points={gon(1675, 574, 208)} fill="#808080" />
      <path d="M1605 223H1675V540H1640V575H1605Z" fill="#6464ff" />
      <path d="M1640 223V540" stroke="#b4b4ff" strokeWidth="1" />
      <g clipPath="url(#disc)">
        <path d="M1605 223H1675V540H1640V575H1605Z" fill="#32327f" />
        <path d="M1640 223V540" stroke="#77779a" strokeWidth="1" />
      </g>
      <path d="M1640 540H1801V609H1640Z" fill="#32327f" />
      <path d="M1639.500 540V609" stroke="#555590" />
      <path d="M1678 536V613" stroke="#55558c" strokeWidth="2" />
      <path d="M1475 499H1715V650H1475V638H1703V511H1475Z" fill="#4040ff" />
      <g clipPath="url(#disc)">
        <path d="M1475 499H1715V650H1475V638H1703V511H1475Z" fill="#1f1f7f" />
      </g>
      <polygon points={gon(1639.5, 574.5, 68.5)} stroke="#1f1f7f" strokeWidth="9.500" />
      <path d="M1640 555H1801V594H1640Z" fill="url(#tube)" />
      <path d="M1643 556H1666M1643 593H1666" stroke="#1a1a60" strokeWidth="2" strokeDasharray="2 1" />
      <path d="M1641.500 557V592" stroke="#1f1f7f" strokeWidth="3" />
      <path d="M1706 556Q1711 575 1706 593" stroke="#1f1f7f" strokeWidth="9" />
      <g stroke="#808080" strokeWidth="1.500">
        <path d="M1566 574.500H1570M1569 552H1574M1569 596H1574M1580 531L1584 534M1580 618L1584 615M1597 514L1600 518M1597 635L1600 631M1618 508V510M1661 508V510M1697 532L1700 534M1697 615L1700 617M1705 553H1707M1705 596H1707M1710 574.500H1714M1639 643V645" />
      </g>
      <path d="M1638 570L1635 574L1638 579" stroke="#1f1f7f" strokeDasharray="2 1" />
      <path d="M1413 499H1475V650H1418V644H1413ZM1424 511V638H1464V511Z" fill="#6464ff" fillRule="evenodd" />
      <path d="M1474.500 517V631" stroke="#3a3ab0" />
      <path d="M1426 548H1437V601H1426Z" fill="#6464ff" />
      <path d="M1431 570H1465V579H1431Z" fill="#5555f4" />
      <path d="M1431 570.500H1465" stroke="#2c2cc4" />
      <path d="M1375 555.500L1418 565V584L1375 594Z" fill="url(#cone)" />
      <path d="M1418 565H1431V584H1418Z" fill="#4343f8" />
      <path d="M1418 565.500H1431M1418 583.500H1431" stroke="#2020b0" strokeDasharray="2 1" />
      <path d="M1469 504h1v1h-1zM1470 533h1v1h-1zM1469 552h1v1h-1zM1470 574h1v1h-1zM1469 644h1v1h-1z" fill="#fff" />
      <path d="M1525 275L1535 285M1535 275L1525 285" stroke="#000" strokeWidth="2" shapeRendering="auto" />
    </svg>
  );
}

const NavBtn = ({ d }: { d: string }) => (
  <div className="flex h-[14px] w-[14px] items-center justify-center bg-[#d9d9d9]">
    <svg viewBox="0 0 10 10" className="h-[10px] w-[10px]" fill="#555" stroke="#555" shapeRendering="crispEdges"><path d={d} /></svg>
  </div>
);

function MainWindow() {
  return (
    <div className="flex w-[768px] shrink-0 flex-col border-l border-t border-[#8b8b8b]">
      <div className="flex h-[20px] shrink-0 items-end pl-[7px] text-[#f2f2f2]">
        <div className="flex h-full items-center gap-[13.500px]">
          <Fit w={52}>Start Page</Fit>
          <Fit w={49.5}>Drawing1</Fit>
          <Fit w={49.5}>Drawing2</Fit>
          <Fit w={49.5}>Drawing3</Fit>
          <Fit w={49.5}>Drawing4</Fit>
        </div>
        <div className="ml-[8px] flex h-[18px] w-[79px] items-center justify-between rounded-t bg-linear-to-b from-[#fafcfd] to-[#d4d9de] pb-px pl-[6px] pr-[6px] font-bold text-black">
          <Fit w={50}>Drawing5</Fit>
          <Cross />
        </div>
        <svg viewBox="0 0 6 10" className="mb-[6px] ml-auto mr-[8px] h-[9px] w-[5px]" fill="none" stroke="#333"><path d="M1 1L5 5L1 9Z" /></svg>
      </div>
      <div className="flex grow flex-col border-[3px] border-[#e9e9e9] border-b-[6px] border-r-[6px]">
        <div className="flex grow flex-col border-l-[3px] border-t-[2px] border-[#747474]">
          <div className="flex">
            <Model />
            <div className="flex grow flex-col bg-[#f0f0f0]">
              <div className="ml-[7px] mt-[554px] h-[17px] w-[2px] bg-[#858585]" />
            </div>
          </div>
          <div className="flex h-[17px] shrink-0 items-center bg-[#f0f0f0]">
            <div className="ml-[25px] h-[2px] w-[17px] bg-[#858585]" />
          </div>
          <div className="flex grow items-center bg-linear-to-b from-[#5c5c5c] to-[#7a7a7a]">
            <div className="flex shrink-0 gap-[2px]">
              <NavBtn d="M1.500 1V9M7 1V9L3 5Z" />
              <NavBtn d="M6 1V9L3 5Z" />
              <NavBtn d="M4 1V9L7 5Z" />
              <NavBtn d="M3 1V9L7 5ZM8.500 1V9" />
            </div>
            <svg viewBox="0 0 120 18" className="ml-[5px] h-[18px] w-[120px]">
              <path d="M50 18L64 0H116L102 18Z" fill="#c3cad4" stroke="#e8e8e8" />
              <path d="M0 18V0H62L48 18Z" fill="#f4f6f8" stroke="#888" />
            </svg>
            <div className="relative flex w-0">
              <div className="absolute -left-[113px] -top-[8px] flex gap-[14px] whitespace-nowrap text-black">
                <Fit w={39} className="font-bold">*Model</Fit>
                <Fit w={42}>*Sheet 1</Fit>
              </div>
            </div>
          </div>
        </div>
      </div>
    </div>
  );
}

/* Selection-mode icon: a framed glyph, a marker square and the pointer. */
const Boxed = ({ children }: Kids) => (
  <div className="flex h-[42px] w-full shrink-0 items-center justify-center">
    <Svg>
      <R x={1} y={2} w={22} h={20} f="none" s="#000" />
      {children}
      <R x={26} y={3} w={6} h={6} />
      <P d="M25 19V29L27 27L29 31L31 30L29 26H31Z" f="#fff" w={1.3} />
    </Svg>
  </div>
);
const Slot = ({ n }: { n: string }) => <div className="flex h-[42px] w-full shrink-0 items-center justify-center"><Icon n={n} /></div>;
const Rule = () => (
  <div className="flex h-2 w-full shrink-0 items-center justify-center"><div className="h-[2px] w-7 bg-linear-to-b from-[#666b73] to-white" /></div>
);
const VGrip = () => (
  <div className="flex h-[10px] w-full shrink-0 items-center justify-center"><div className="h-[3px] w-[31px] bg-[repeating-linear-gradient(90deg,#3f4349_0_2px,#dfe1e4_2px_4px)]" /></div>
);
const VBAR = "bg-linear-to-r from-[#cfd2d6] via-[#b9bdc4] to-[#939aa4]";
const ArrowMore = () => (
  <svg viewBox="0 0 14 12" className="h-3 w-[14px]" fill="#555" stroke="#fff" shapeRendering="crispEdges"><path d="M1.500 0V12M6 1V11L12 6Z" /></svg>
);

function RightBars() {
  return (
    <div className="flex shrink-0">
      <div className={`flex w-[48px] flex-col border-l border-[#5d656f] pr-[2px] ${VBAR}`}>
        <VGrip />
        <Slot n="vAxis" />
        <Boxed>
          <R x={9} y={5} w={10} h={13} f="#fff" />
          <R x={15} y={7} w={4} h={12} f="#444" />
          <P d="M4 6H8M4 10H8M4 14H8" />
        </Boxed>
        <Rule />
        <Boxed><P d="M5 10L7 7H10L14 13H17L19 10L17 7H14L10 13H7Z" s="#00f" /></Boxed>
        <Boxed><R x={6} y={11} w={6} h={6} f="#00f" /><R x={14} y={6} w={6} h={6} f="#00f" /></Boxed>
        <Rule />
        <Boxed><P d="M6 6L12 9L18 6V17L12 14L6 17Z" f="#e00020" s="#600" w={1} /></Boxed>
        <Boxed><P d="M7 6H12L18 13V18H13L7 11Z" f="#f02030" s="#800" w={1} /><P d="M8 10L16 15" /></Boxed>
        <Rule />
        <Boxed><P d="M12 5V17M6 11H18M8 7L16 15M16 7L8 15" s="#e81828" /></Boxed>
        <Boxed><P d="M12 5V15M8 6H16M5 17L9 14H16L20 17" s="#e81828" /></Boxed>
        <Boxed><P d="M12 6V17M5 9L9 6H16L20 9M9 17H15" s="#e81828" /></Boxed>
        <Rule />
        <Boxed><P d="M7 6L17 15" s="#e81828" w={6} /><R x={14} y={13} w={4} h={4} /><P d="M9 6L15 11" s="#fff" w={1} /></Boxed>
        <Boxed><R x={4} y={7} w={16} h={4} f="#e81828" /><P d="M13 11V17M10 17H16" /></Boxed>
        <Boxed><P d="M4 16H20M6 6V16M12 6V16M18 6V16" s="#e81828" /><R x={4} y={12} w={16} h={5} f="#e81828" /></Boxed>
        <Rule />
        <Boxed><P d="M6 6L9 4L12 7L15 4L18 7L15 8L12 5L9 8Z" s="#22f" w={1.5} /><R x={4} y={12} w={12} h={3} /><R x={8} y={15} w={4} h={4} /></Boxed>
        <Boxed><R x={4} y={13} w={16} h={4} f="#e81828" /><P d="M10 6H16M13 6V18M11 12V18H15" /></Boxed>
        <div className="flex h-[57px] shrink-0 items-center justify-center">
          <div className="font-['Liberation_Sans'] text-[11.500px] tracking-[0.200px] text-[#222] [writing-mode:vertical-rl]">H Assbly</div>
        </div>
        <Boxed><R x={4} y={5} w={16} h={6} f="#e81828" /><P d="M20 14H6M10 9V19L6 14Z" f="#000" /></Boxed>
      </div>
      <div className="flex w-[48px] flex-col">
        <div className={`flex h-[364px] flex-col rounded-b border-l border-[#5d656f] pr-[2px] ${VBAR}`}>
          <VGrip />
          <Slot n="branch" />
          <Slot n="vWand" />
          <Rule />
          <Slot n="vTee" />
          <Slot n="vAngle" />
          <Slot n="vZ1" />
          <Rule />
          <Slot n="vZ2" />
          <Slot n="vReduce" />
          <Slot n="vU" />
        </div>
        <div className="flex h-5 items-center justify-end bg-linear-to-r from-[#444b55] to-[#a3a8b1] pr-1"><ArrowMore /></div>
      </div>
    </div>
  );
}

const MENU: [string, number][] = [
  ["File", 18], ["Edit", 19.5], ["Select", 30], ["Snaps", 30.5], ["Tools", 26.5], ["Actions", 37.5], ["Commands", 56.5],
  ["Auto Draw", 55], ["Roof Planes", 60], ["Wizards", 41], ["Hydraulics", 52], ["Finish", 30.5], ["Alerts", 28.5],
  ["Listing", 33.5], ["Parts Database", 75.5], ["AutoPREP", 50.5], ["Settings", 41.5], ["View", 24.5], ["Window", 43.5], ["Help", 23],
];

const Sep = () => <div className="h-[14px] w-px shrink-0 bg-[#9a9a9a]" />;

export default function App() {
  return (
    <div className="flex h-[1032px] w-[1920px] flex-col overflow-hidden bg-[#535353] font-['Open_Sans','Noto_Sans',sans-serif] text-[11.500px] leading-[16px]">
      {/* Title bar */}
      <div className="flex h-[23px] shrink-0 items-center bg-linear-to-r from-[#e4f9f4] via-[#e3f8fb] via-47% to-[#e8f8ee] to-70% pl-[2px] text-black">
        <svg viewBox="0 0 16 16" className="h-4 w-4">
          <rect width="16" height="16" rx="2" fill="#3c414c" />
          <path d="M3 12L7 3H10V12M5 9H10" stroke="#4c8dff" strokeWidth="2" fill="none" />
          <path d="M10 13Q15 12 13 7" stroke="#c4c8d0" strokeWidth="1.500" fill="none" />
        </svg>
        <div className="pl-[6px] text-[12px]"><Fit w={286}>AutoSPRINK® 2023 Platinum - Drawing5 - [Drawing5]</Fit></div>
        <svg viewBox="0 0 104 12" className="ml-auto mr-[20px] h-3 w-[104px] -translate-y-[1.500px]" fill="none" stroke="#111" strokeWidth="1">
          <path d="M4 6.500H14" />
          <path d="M48.500 4Q48.500 3 49.500 3H54Q55.500 3 55.500 4.500V9.500Q55.500 10.500 54.500 10.500H49.500Q48.500 10.500 48.500 9.500ZM50.500 1.500H55Q57.500 1.500 57.500 4V8.500" />
          <path d="M93.500 1L103 10.500M103 1L93.500 10.500" />
        </svg>
      </div>
      {/* Menu bar */}
      <div className="flex h-[23px] shrink-0 items-center pb-px pl-[3px] text-[#f4f4f4]">
        <svg viewBox="0 0 16 16" className="h-4 w-4" shapeRendering="crispEdges">
          <path d="M1 1H12L15 4V15H1Z" fill="#fff" stroke="#222" />
          <path d="M1 1H12V5H1Z" fill="#ff0" />
          <path d="M2 6L8 14H2Z" fill="#0c0" />
          <path d="M9 7H13V13L9 14Z" fill="#2a8" />
          <path d="M10 5L14 8" stroke="#f0f" />
        </svg>
        <div className="flex gap-[15.500px] pl-[10px]">
          {MENU.map(([m, w]) => <Fit key={m} w={w}>{m}</Fit>)}
        </div>
        <svg viewBox="0 0 44 12" className="ml-auto mr-1 h-3 w-[44px] translate-y-[2px]" fill="none" stroke="#a8aeb8" strokeWidth="1.500">
          <path d="M2 10H9M17 5H24V10H17ZM19 5V2.500H26V8H24" />
          <path d="M34 1.500L41 10M41 1.500L34 10" strokeWidth="2.200" />
        </svg>
      </div>
      {/* Toolbar rows */}
      <div className="mb-px flex h-[45px] shrink-0">
        <Bar end="w-[481px]">
          <B n="fresh" /><B n="open" /><B n="save" /><B n="clock" hot /><B n="gear" />
          <L w={64}>Import DWG</L>
          <B n="dwg" /><B n="pages" /><B n="cubes" /><B n="lock" />
        </Bar>
        <Bar end="w-[1337px]">
          <B n="helmet" /><B n="wand1" /><B n="wand2" /><B n="wand3" /><B n="wand4" /><B n="pipeDrop" /><B n="orbit" />
          <L w={94} off>Remote Area Table</L>
          <B n="area" /><B n="plusMinus" />
          <L w={93}>Analysis Reports...</L>
          <B n="demand" />
          <L w={211}>Keep Hydraulically Most Demanding Area</L>
          <L w={46.5}>Riser Tag</L>
          <L w={92} off>Update Riser Tags</L>
          <B n="three" /><B n="three2" />
          <L w={62}>Renumber...</L>
          <B n="cleanup" />
          <L w={43}>Cleanup</L>
          <B n="squares" />
        </Bar>
      </div>
      <div className="mb-px flex h-[45px] shrink-0">
        <Bar end="w-[1893px]">
          <div className={`flex h-[41px] w-[63px] shrink-0 items-center pl-1 text-black ${HOT}`}><Fit w={55}>Auto Draw</Fit></div>
          <B n="protractor" /><B n="ruler" /><B n="coverage" />
          <L w={109}>3 Point Coverage Cell</L>
          <B n="pipe" /><B n="beam" hot /><B n="gold" /><B n="cap" /><B n="dcap" /><B n="flange" /><B n="cross" /><B n="elbow" /><B n="thinFlange" /><B n="faucet" />
          <L w={88}>Mechanical Cross</L>
          <L w={78}>Mechanical Tee</L>
          <B n="reducer" />
          <L w={35}>Saddle</L>
          <L w={60}>Seismic Flex</L>
          <B n="tee" /><B n="coupling" /><B n="weld" /><B n="union" /><B n="pump" /><B n="wheel" /><B n="sprinkler1" /><B n="sprinkler2" /><B n="sprinkler3" />
          <B n="panelBox" /><B n="star" />
          <B n="one" />
          <B><div className="flex flex-col font-['Liberation_Mono'] text-[17px] font-bold leading-[15px] text-[#111]"><Fit w={29}>ABC</Fit><Fit w={29}>ABC</Fit></div></B>
          <B><span className="font-['Liberation_Serif'] text-[35px] font-bold leading-none text-black">A</span></B>
          <B n="lasso" /><B n="profile" />
          <L w={70}>Parts Profile...</L>
        </Bar>
      </div>
      <div className="flex h-[60px] shrink-0 items-start">
        <Bar end="w-[460px]">
          <L w={74}>Create Detail...</L>
          <B n="detail" /><B n="detail2" />
          <L w={58}>Hide Layers</L>
          <L w={67.5}>Isolate Layers</L>
          <L w={122}>Interference Checking...</L>
        </Bar>
        <Bar end="w-[441px]">
          <L w={122}>Hydraulic Calculations...</L>
          <B n="graph" /><B n="book" /><B n="table" /><B n="printer" /><B n="printDoc" />
          <L w={24}>Print</L>
          <B n="windowIcon" />
        </Bar>
        <Bar end="w-[439px]">
          <B n="elevate" />
          <L w={79}>Elevate to Pipes</L>
          <L w={79.5}>Elevate Beams...</L>
          <B n="hydrant" /><B n="tagY" /><B n="tagY2" />
          <L w={63}>Import DWG</L>
        </Bar>
        <Bar h="h-[59px]" end="w-[258px]">
          <div className={`flex h-[55px] w-[56px] shrink-0 flex-col items-center justify-between pt-[2px] text-black ${HOT}`}><Icon n="shaded" /><Fit w={38} className="pb-[2px]">Shaded</Fit></div>
          <div className="flex h-[55px] w-[77px] shrink-0 flex-col items-center justify-between pt-[2px]"><Icon n="wire" /><Fit w={57} className="pb-[2px]">Wire Frame</Fit></div>
          <div className="flex h-[55px] w-[42px] shrink-0 flex-col items-center justify-end"><Fit w={24} className="pb-[2px]">GLSL</Fit></div>
          <div className={`flex h-[55px] w-[69px] shrink-0 flex-col items-center justify-end text-black ${HOT}`}><Fit w={51} className="pb-[2px]">OpenGL®</Fit></div>
        </Bar>
        <Bar end="w-[56px]">
          <B n="branch" />
        </Bar>
      </div>
      {/* Panels and drawing window */}
      <div className="flex h-[769px] shrink-0">
        <Layers />
        <div className="w-1 shrink-0" />
        <Alerts />
        <Splitter />
        <Select />
        <Splitter />
        <Symbols />
        <div className="w-[4px] shrink-0" />
        <MainWindow />
        <RightBars />
      </div>
      {/* Status bar */}
      <div className="flex h-[19px] shrink-0 items-end text-white">
        <div className="flex h-full w-[1824px] items-center bg-linear-to-b from-[#454955] from-0% via-[#3b3e46] via-40% to-[#2d2d2b] to-45% pl-1 pt-[3px]">
          <Fit w={177}>Locate the beginning of the beam.</Fit>
          <div className="ml-auto flex shrink-0 items-center gap-[3px]">
            <Sep /><Fit w={51}>7 selected</Fit><Sep />
            <Sep /><Fit w={51}>Elev1: 0'-0</Fit><Sep /><Fit w={64.5}>A:1'-5½, 1'-5</Fit><Sep />
            <Sep /><Fit w={26.5}># Off</Fit><Sep /><Fit w={24}>Foot</Fit><Sep />
          </div>
        </div>
        <div className="flex h-[21px] w-[48px] items-center justify-between bg-linear-to-r from-[#444b55] to-[#a3a8b1] pl-[10px] pr-1">
          <svg viewBox="0 0 8 12" className="h-3 w-2" fill="none" stroke="#fff" shapeRendering="crispEdges"><path d="M1 1L4 3L7 1M1 5L4 7L7 5M3 9L5 11" /></svg>
          <ArrowMore />
        </div>
      </div>
      {/* Bottom toolbars */}
      <div className="flex h-[46px] shrink-0 items-start">
        <Bar end="w-[505px]">
          <B n="snap1" /><B n="snap2" hot /><B n="snap3" hot /><B n="snap4" /><B n="snap5" /><B n="snap6" /><B n="snap7" /><B n="snap8" hot /><B n="snap9" hot />
          <div className="mx-[3px] h-7 w-[2px] shrink-0 bg-linear-to-r from-[#70757d] to-white" />
          <B n="snap10" /><B n="magnetBig" hot />
        </Bar>
        <Bar end="w-[202px]">
          <div className={`flex h-[41px] w-[36px] shrink-0 items-center justify-center text-black ${HOT}`}><Fit w={27}>Input</Fit></div>
          <B n="ops" />
          <div className="-ml-[6px] flex shrink-0"><B n="upBlack" /></div>
          <div className="ml-2 flex h-[15px] w-[60px] shrink-0 items-center bg-white text-white"><span className="bg-[#0078d7] leading-[13px]">2</span></div>
        </Bar>
        <Bar end="w-[1068px]">
          <B n="viewWin" />
          <div className="flex h-[41px] w-[44px] shrink-0 items-center justify-center border border-[#9aa3a8] bg-[#d0d8da]"><Icon n="target" /></div>
          <L w={76}>Lock On Target</L>
          <B n="zoomOut" /><B n="zoomIn" /><B n="viewBack" /><B n="viewFwd" /><B n="rotL" /><B n="up" /><B n="down" /><B n="rotR" /><B n="left" /><B n="right" />
          <B n="spinL" /><B n="spinR" /><B n="house1" /><B n="house2" /><B n="house3" /><B n="house4" /><B n="zoomSel" /><B n="extents" /><B n="iso" /><B n="plan" hot />
        </Bar>
      </div>
    </div>
  );
}
